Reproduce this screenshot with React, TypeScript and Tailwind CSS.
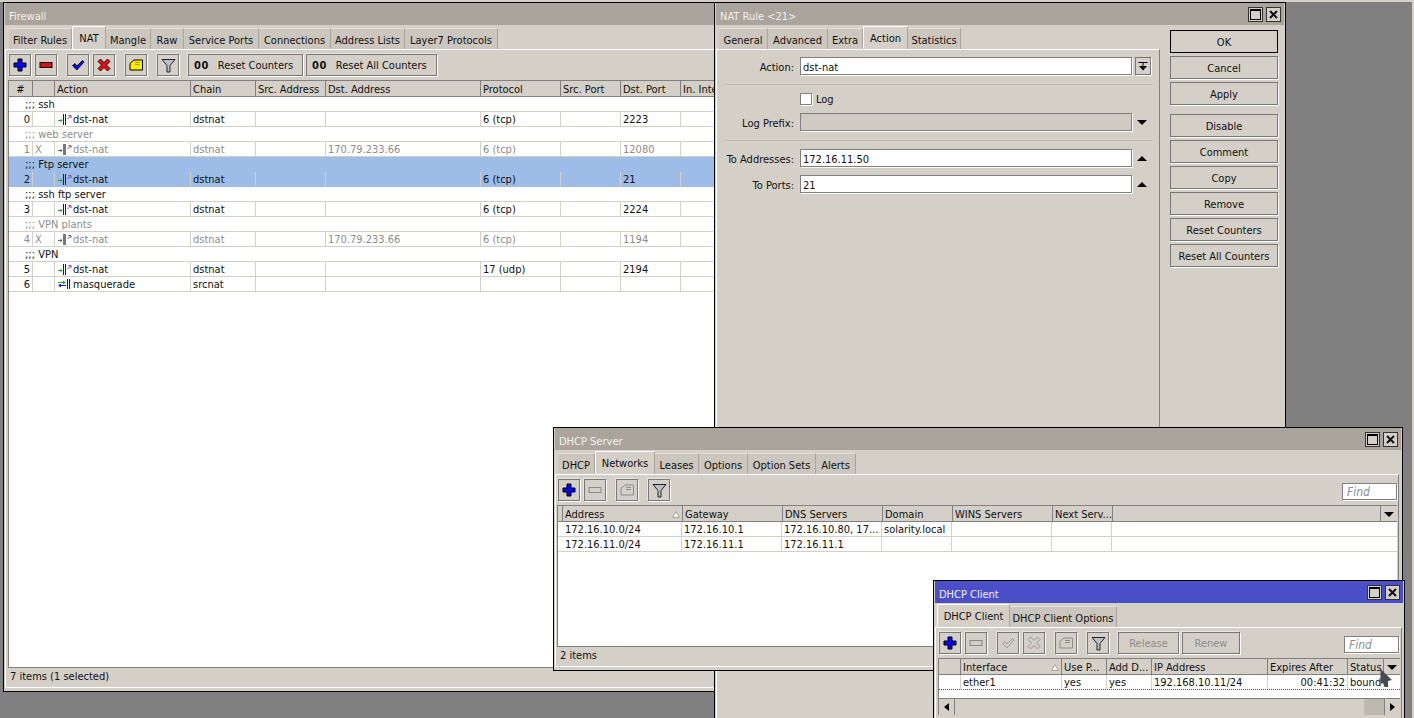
import React from 'react';

const bevel = 'border border-[#777] shadow-[1px_1px_0_#fff,-1px_-1px_0_#e8e6e0]';

const Tab = ({ label, w, active }: { label: string; w: string; active?: boolean }) => (
  <div
    className={`${w} flex items-center justify-center shrink-0 whitespace-nowrap border-r border-[#a9a59d] ${
      active
        ? 'h-[23px] bg-[#d4d0c8] border-t border-l border-t-white border-l-white pt-[1px]'
        : 'h-[21px] bg-[#cbc7bf] border-t border-t-[#e4e1db] pt-[2px]'
    }`}
  >
    {label}
  </div>
);

const TitleBar = ({ title, buttons, blue }: { title: string; buttons?: boolean; blue?: boolean }) => (
  <div
    className={`h-[22px] shrink-0 flex items-center justify-between pl-[4px] pr-[3px] text-[#f2f0ec] ${
      blue ? 'bg-[#4a4fc8]' : 'bg-[#a9a59d]'
    }`}
  >
    <span className="pt-[4px]">{title}</span>
    {buttons && (
      <div className="flex gap-[3px]">
        <div className="w-[15px] h-[15px] bg-[#d4d0c8] border border-[#333] flex items-center justify-center">
          <div className="w-[11px] h-[11px] border border-black border-t-2" />
        </div>
        <div className="w-[15px] h-[15px] bg-[#d4d0c8] border border-[#333] flex items-center justify-center">
          <svg width="9" height="9" viewBox="0 0 9 9">
            <path d="M1 1 L8 8 M8 1 L1 8" stroke="#111" strokeWidth="2" />
          </svg>
        </div>
      </div>
    )}
  </div>
);

const Plus = () => (
  <svg width="14" height="14" viewBox="0 0 14 14">
    <path d="M5 1h4v4h4v4H9v4H5V9H1V5h4z" fill="#0a0ae6" stroke="#000" strokeWidth="1" />
  </svg>
);

const Minus = ({ off }: { off?: boolean }) => (
  <svg width="14" height="8" viewBox="0 0 14 8">
    <rect x="1" y="1.5" width="12" height="5" fill={off ? '#d4d0c8' : '#e01010'} stroke={off ? '#8a8a8a' : '#000'} />
  </svg>
);

const Check = ({ off }: { off?: boolean }) => (
  <svg width="14" height="14" viewBox="0 0 14 14">
    <path
      d="M1.5 7.5 L4 5.5 L5.8 8 L11.5 2.5 L13 4 L5.8 12 Z"
      fill={off ? '#d4d0c8' : '#0a0ae6'}
      stroke={off ? '#8a8a8a' : '#000'}
      strokeWidth="0.8"
    />
  </svg>
);

const Cross = ({ off }: { off?: boolean }) => (
  <svg width="14" height="14" viewBox="0 0 14 14">
    <path
      d="M3.5 1 L7 4.5 L10.5 1 L13 3.5 L9.5 7 L13 10.5 L10.5 13 L7 9.5 L3.5 13 L1 10.5 L4.5 7 L1 3.5 Z"
      fill={off ? '#d4d0c8' : '#e01010'}
      stroke={off ? '#8a8a8a' : '#000'}
      strokeWidth="0.8"
    />
  </svg>
);

const Note = ({ off }: { off?: boolean }) => (
  <svg width="15" height="12" viewBox="0 0 15 12">
    <path
      d="M1 4.5 L5 1 H13.5 V11 H1 Z"
      fill={off ? '#d4d0c8' : '#ffee00'}
      stroke={off ? '#8a8a8a' : '#000'}
    />
    <path d="M6 3.5H11M6 5.5H11" stroke={off ? '#8a8a8a' : '#b09a00'} />
  </svg>
);

const Funnel = () => (
  <svg width="15" height="15" viewBox="0 0 15 15">
    <path d="M1 1.5 H14 L9 7.5 V14 H6 V7.5 Z" fill="#b9c0c8" stroke="#222" />
  </svg>
);

const ToolBtn = ({ children, cls }: { children: React.ReactNode; cls?: string }) => (
  <div className={`w-[22px] h-[22px] mt-[1px] shrink-0 flex items-center justify-center ${bevel} ${cls ?? ''}`}>{children}</div>
);

const TextBtn = ({ w, label, zeros, off }: { w: string; label: string; zeros?: boolean; off?: boolean }) => (
  <div
    className={`${w} h-[22px] mt-[1px] shrink-0 flex items-center gap-[9px] ${bevel} ${
      off ? 'text-[#8c8a85] justify-center' : ''
    } ${zeros ? 'pl-[5px]' : ''}`}
  >
    {zeros && <span className="font-bold tracking-[0.5px]">00</span>}
    {label}
  </div>
);

const DstNatIcon = ({ off }: { off?: boolean }) => (
  <svg width="14" height="11" viewBox="0 0 14 11" className="shrink-0">
    <path d="M0 6.5H3" stroke={off ? '#666' : '#2f9f4f'} />
    <path d="M2.5 4.5 L4.5 6.5 L2.5 8.5Z" fill={off ? '#666' : '#2f9f4f'} />
    {off ? (
      <rect x="5" y="0" width="3" height="11" fill="#777" />
    ) : (
      <path d="M5.5 0V11M7.5 0V11" stroke="#222" />
    )}
    <path d="M9.5 5 L12.5 2 M10.5 1.5H13V4" stroke={off ? '#666' : '#8a3fa8'} fill="none" />
  </svg>
);

const MasqIcon = () => (
  <svg width="14" height="11" viewBox="0 0 14 11" className="shrink-0">
    <path d="M0 3.5H6" stroke="#2f9f4f" />
    <path d="M5 1.5 L8 3.5 L5 5.5Z" fill="#2f9f4f" />
    <path d="M2 6.5H8" stroke="#1a1ad0" />
    <path d="M3 4.5 L0 6.5 L3 8.5Z" fill="#1a1ad0" />
    <path d="M9.5 0V10M11.5 0V10" stroke="#222" />
  </svg>
);

const HeadCell = ({ w, label, sort, cls }: { w: string; label?: string; sort?: boolean; cls?: string }) => (
  <div className={`${w} shrink-0 h-full flex items-center justify-between pl-[2px] pr-[2px] pt-[2px] border-r border-[#808080] overflow-hidden whitespace-nowrap ${cls ?? ''}`}>
    <span>{label}</span>
    {sort && (
      <svg width="8" height="7" viewBox="0 0 8 7" className="shrink-0">
        <path d="M4 0.5 L7.5 6.5 H0.5 Z" fill="#f2f0ec" stroke="#a9a59d" />
      </svg>
    )}
  </div>
);

const Cell = ({ w, children, right, cls }: { w: string; children?: React.ReactNode; right?: boolean; cls?: string }) => (
  <div
    className={`${w} shrink-0 h-full flex items-center gap-[1px] pl-[2px] pr-[2px] border-r border-[#d4d0c8] overflow-hidden whitespace-nowrap ${
      right ? 'justify-end' : ''
    } ${cls ?? ''}`}
  >
    {children}
  </div>
);

const Comment = ({ text, off, sel }: { text: string; off?: boolean; sel?: boolean }) => (
  <div
    className={`h-[15px] flex items-center pl-[16px] border-b border-[#d4d0c8] whitespace-nowrap ${
      off ? 'text-[#8c8c8c]' : ''
    } ${sel ? 'bg-[#9dbde8] border-b-[#9dbde8]' : ''}`}
  >
    ;;; {text}
  </div>
);

type NatRow = {
  n: string;
  x?: string;
  masq?: boolean;
  chain: string;
  dst?: string;
  proto?: string;
  port?: string;
  off?: boolean;
  sel?: boolean;
};

const NatLine = ({ r }: { r: NatRow }) => (
  <div
    className={`h-[15px] flex border-b ${r.sel ? 'bg-[#9dbde8] border-[#9dbde8]' : 'border-[#d4d0c8]'} ${
      r.off ? 'text-[#8c8c8c]' : ''
    }`}
  >
    <Cell w="w-[24px]" right>{r.n}</Cell>
    <Cell w="w-[22px]">{r.x}</Cell>
    <Cell w="w-[136px]" cls="pl-[3px]">
      {r.masq ? <MasqIcon /> : <DstNatIcon off={r.off} />}
      <span>{r.masq ? 'masquerade' : 'dst-nat'}</span>
    </Cell>
    <Cell w="w-[65px]">{r.chain}</Cell>
    <Cell w="w-[70px]" />
    <Cell w="w-[155px]">{r.dst}</Cell>
    <Cell w="w-[80px]">{r.proto}</Cell>
    <Cell w="w-[60px]" />
    <Cell w="w-[60px]">{r.port}</Cell>
    <Cell w="w-[60px]" />
  </div>
);

const FormRow = ({ label, value, tail, disabled, cls }: { label: string; value?: string; tail: React.ReactNode; disabled?: boolean; cls?: string }) => (
  <div className={`flex items-center h-[18px] ${cls ?? ''}`}>
    <div className="w-[76px] pt-[2px] text-right shrink-0 whitespace-nowrap">{label}</div>
    <div className={`ml-[6px] w-[332px] h-[18px] flex items-center pl-[2px] pt-[2px] border border-[#808080] shadow-[1px_1px_0_#fff] ${disabled ? 'bg-[#cfcbc3]' : 'bg-white'}`}>
      {value}
    </div>
    {tail}
  </div>
);

const ArrowUp = () => <div className="ml-[5px] w-0 h-0 border-x-[5px] border-x-transparent border-b-[5px] border-b-black" />;
const ArrowDown = () => <div className="ml-[5px] w-0 h-0 border-x-[5px] border-x-transparent border-t-[5px] border-t-black" />;

const SideBtn = ({ label, main, cls }: { label: string; main?: boolean; cls?: string }) => (
  <div className={`w-[108px] h-[23px] shrink-0 flex items-center justify-center pt-[1px] ${main ? 'border border-black' : 'border border-[#777] shadow-[1px_1px_0_#fff]'} ${cls ?? ''}`}>
    {label}
  </div>
);

const Find = ({ w }: { w: string }) => (
  <div className={`${w} h-[17px] bg-white border border-[#808080] shadow-[1px_1px_0_#fff] flex items-center pl-[4px] italic text-[12px] text-[#8a8f96]`}>
    Find
  </div>
);

const natRows: { comment: string; row: NatRow }[] = [
  { comment: 'ssh', row: { n: '0', chain: 'dstnat', proto: '6 (tcp)', port: '2223' } },
  { comment: 'web server', row: { n: '1', x: 'X', chain: 'dstnat', dst: '170.79.233.66', proto: '6 (tcp)', port: '12080', off: true } },
  { comment: 'Ftp server', row: { n: '2', chain: 'dstnat', proto: '6 (tcp)', port: '21', sel: true } },
  { comment: 'ssh ftp server', row: { n: '3', chain: 'dstnat', proto: '6 (tcp)', port: '2224' } },
  { comment: 'VPN plants', row: { n: '4', x: 'X', chain: 'dstnat', dst: '170.79.233.66', proto: '6 (tcp)', port: '1194', off: true } },
  { comment: 'VPN', row: { n: '5', chain: 'dstnat', proto: '17 (udp)', port: '2194' } },
];

const App: React.FC = () => {
  return (
    <div className="relative w-[1414px] h-[718px] overflow-hidden bg-[#808080] border-t-2 border-r-2 border-[#d4d0c8] text-[11px] leading-none text-[#111] font-['DejaVu_Sans_Condensed','DejaVu_Sans',sans-serif]">
      {/* Firewall */}
      <div className="absolute left-[3px] top-0 w-[720px] h-[690px] z-[1] flex flex-col bg-[#d4d0c8] border border-black p-[1px] pt-0">
        <TitleBar title="Firewall" />
        <div className="h-[24px] shrink-0 flex items-end pl-[4px]">
          <Tab label="Filter Rules" w="w-[63px]" />
          <Tab label="NAT" w="w-[34px]" active />
          <Tab label="Mangle" w="w-[45px]" />
          <Tab label="Raw" w="w-[33px]" />
          <Tab label="Service Ports" w="w-[75px]" />
          <Tab label="Connections" w="w-[72px]" />
          <Tab label="Address Lists" w="w-[74px]" />
          <Tab label="Layer7 Protocols" w="w-[93px]" />
        </div>
        <div className="flex-1 min-h-0 flex flex-col border-t border-l border-b border-white pl-[2px] mb-[2px]">
          <div className="h-[24px] mt-[3px] shrink-0 flex pl-[1px]">
            <ToolBtn><Plus /></ToolBtn>
            <ToolBtn cls="ml-[4px]"><Minus /></ToolBtn>
            <ToolBtn cls="ml-[10px]"><Check /></ToolBtn>
            <ToolBtn cls="ml-[4px]"><Cross /></ToolBtn>
            <ToolBtn cls="ml-[10px]"><Note /></ToolBtn>
            <ToolBtn cls="ml-[10px]"><Funnel /></ToolBtn>
            <TextBtn w="w-[115px] ml-[9px]" label="Reset Counters" zeros />
            <TextBtn w="w-[131px] ml-[3px]" label="Reset All Counters" zeros />
          </div>
          <div className="mt-[3px] flex-1 min-h-0 flex flex-col bg-white border-t border-l border-[#808080]">
            <div className="h-[16px] shrink-0 flex bg-[#d4d0c8] border-b border-[#808080]">
              <HeadCell w="w-[24px]" label="#" cls="justify-center" />
              <HeadCell w="w-[22px]" />
              <HeadCell w="w-[136px]" label="Action" />
              <HeadCell w="w-[65px]" label="Chain" />
              <HeadCell w="w-[70px]" label="Src. Address" />
              <HeadCell w="w-[155px]" label="Dst. Address" />
              <HeadCell w="w-[80px]" label="Protocol" />
              <HeadCell w="w-[60px]" label="Src. Port" />
              <HeadCell w="w-[60px]" label="Dst. Port" />
              <HeadCell w="w-[60px]" label="In. Inter" />
            </div>
            {natRows.map(({ comment, row }) => (
              <React.Fragment key={row.n}>
                <Comment text={comment} off={row.off} sel={row.sel} />
                <NatLine r={row} />
              </React.Fragment>
            ))}
            <NatLine r={{ n: '6', masq: true, chain: 'srcnat' }} />
          </div>
          <div className="h-[20px] shrink-0 flex items-center pl-[2px] pb-[2px] border-t border-[#808080]">7 items (1 selected)</div>
        </div>
      </div>

      {/* NAT Rule */}
      <div className="absolute left-[714px] top-0 w-[572px] h-[730px] z-[2] flex flex-col bg-[#d4d0c8] border border-black p-[1px] pt-0">
        <TitleBar title="NAT Rule <21>" buttons />
        <div className="flex flex-1 min-h-0">
          <div className="w-[444px] shrink-0 flex flex-col">
            <div className="h-[24px] shrink-0 flex items-end pl-[3px]">
              <Tab label="General" w="w-[49px]" />
              <Tab label="Advanced" w="w-[60px]" />
              <Tab label="Extra" w="w-[35px]" />
              <Tab label="Action" w="w-[45px]" active />
              <Tab label="Statistics" w="w-[53px]" />
            </div>
            <div className="flex-1 border-t border-l border-r border-t-white border-l-white border-r-[#808080] pt-[7px] pl-[1px]">
              <FormRow
                label="Action:"
                value="dst-nat"
                tail={
                  <div className="ml-[3px] w-[16px] h-[18px] flex items-center justify-center border border-[#777] shadow-[1px_1px_0_#fff]">
                    <svg width="10" height="9" viewBox="0 0 10 9">
                      <path d="M0.5 0.5H9.5M5 1V4" stroke="#000" />
                      <path d="M1 4H9L5 8.5Z" fill="#000" />
                    </svg>
                  </div>
                }
              />
              <div className="mt-[9px] mx-[8px] w-[427px] h-[1px] bg-[#c2beb6]" />
              <div className="mt-[7px] ml-[82px] flex items-center h-[13px] gap-[4px]">
                <div className="w-[12px] h-[12px] bg-white border border-[#808080] shadow-[1px_1px_0_#fff]" />
                <span className="pt-[2px]">Log</span>
              </div>
              <FormRow cls="mt-[8px]" label="Log Prefix:" disabled tail={<ArrowDown />} />
              <div className="mt-[9px] mx-[8px] w-[427px] h-[1px] bg-[#c2beb6]" />
              <FormRow cls="mt-[8px]" label="To Addresses:" value="172.16.11.50" tail={<ArrowUp />} />
              <FormRow cls="mt-[8px]" label="To Ports:" value="21" tail={<ArrowUp />} />
            </div>
          </div>
          <div className="flex-1 flex flex-col gap-[3px] pt-[5px] pl-[10px]">
            <SideBtn label="OK" main />
            <SideBtn label="Cancel" />
            <SideBtn label="Apply" />
            <SideBtn label="Disable" cls="mt-[6px]" />
            <SideBtn label="Comment" />
            <SideBtn label="Copy" />
            <SideBtn label="Remove" />
            <SideBtn label="Reset Counters" />
            <SideBtn label="Reset All Counters" />
          </div>
        </div>
      </div>

      {/* DHCP Server */}
      <div className="absolute left-[553px] top-[425px] w-[850px] h-[244px] z-[3] flex flex-col bg-[#d4d0c8] border border-black p-[1px] pt-0">
        <TitleBar title="DHCP Server" buttons />
        <div className="h-[24px] shrink-0 flex items-end pl-[3px]">
          <Tab label="DHCP" w="w-[37px]" />
          <Tab label="Networks" w="w-[60px]" active />
          <Tab label="Leases" w="w-[44px]" />
          <Tab label="Options" w="w-[49px]" />
          <Tab label="Option Sets" w="w-[68px]" />
          <Tab label="Alerts" w="w-[40px]" />
        </div>
        <div className="flex-1 min-h-0 flex flex-col border-t border-l border-r border-b border-t-white border-l-white border-b-white border-r-[#808080] pl-[1px] mb-[2px] mr-[2px]">
          <div className="h-[24px] mt-[3px] shrink-0 flex pl-[1px] pr-[1px]">
            <ToolBtn><Plus /></ToolBtn>
            <ToolBtn cls="ml-[4px]"><Minus off /></ToolBtn>
            <ToolBtn cls="ml-[10px]"><Note off /></ToolBtn>
            <ToolBtn cls="ml-[10px]"><Funnel /></ToolBtn>
            <div className="flex-1" />
            <div className="pt-[5px]"><Find w="w-[55px]" /></div>
          </div>
          <div className="mt-[3px] mr-[1px] flex-1 min-h-0 flex flex-col bg-white border-t border-l border-[#808080]">
            <div className="h-[16px] shrink-0 flex bg-[#d4d0c8] border-b border-[#808080]">
              <HeadCell w="w-[4px]" />
              <HeadCell w="w-[120px]" label="Address" sort />
              <HeadCell w="w-[100px]" label="Gateway" />
              <HeadCell w="w-[100px]" label="DNS Servers" />
              <HeadCell w="w-[70px]" label="Domain" />
              <HeadCell w="w-[100px]" label="WINS Servers" />
              <HeadCell w="w-[60px]" label="Next Serv..." />
              <HeadCell w="w-[268px]" />
              <div className="flex-1 flex items-center justify-center pt-[1px]">
                <div className="w-0 h-0 border-x-[5px] border-x-transparent border-t-[5px] border-t-black" />
              </div>
            </div>
            {[
              ['172.16.10.0/24', '172.16.10.1', '172.16.10.80, 17...', 'solarity.local'],
              ['172.16.11.0/24', '172.16.11.1', '172.16.11.1', ''],
            ].map((r) => (
              <div key={r[0]} className="h-[15px] flex border-b border-[#d4d0c8]">
                <Cell w="w-[5px]" cls="border-r-0" />
                <Cell w="w-[119px]">{r[0]}</Cell>
                <Cell w="w-[100px]">{r[1]}</Cell>
                <Cell w="w-[100px]">{r[2]}</Cell>
                <Cell w="w-[70px]">{r[3]}</Cell>
                <Cell w="w-[100px]" />
                <Cell w="w-[60px]" />
              </div>
            ))}
          </div>
          <div className="h-[20px] shrink-0 flex items-center pl-[3px] pb-[2px] border-t border-[#808080]">2 items</div>
        </div>
      </div>

      {/* DHCP Client */}
      <div className="absolute left-[933px] top-[578px] w-[472px] h-[160px] z-[4] flex flex-col bg-[#d4d0c8] border border-black p-[1px] pt-0">
        <TitleBar title="DHCP Client" buttons blue />
        <div className="h-[24px] shrink-0 flex items-end pl-[2px]">
          <Tab label="DHCP Client" w="w-[73px]" active />
          <Tab label="DHCP Client Options" w="w-[107px]" />
        </div>
        <div className="flex-1 min-h-0 flex flex-col border-t border-l border-r border-t-white border-l-white border-r-[#808080] pl-[1px] mr-[1px]">
          <div className="h-[24px] mt-[3px] shrink-0 flex pl-[2px] pr-[2px]">
            <ToolBtn><Plus /></ToolBtn>
            <ToolBtn cls="ml-[4px]"><Minus off /></ToolBtn>
            <ToolBtn cls="ml-[10px]"><Check off /></ToolBtn>
            <ToolBtn cls="ml-[4px]"><Cross off /></ToolBtn>
            <ToolBtn cls="ml-[10px]"><Note off /></ToolBtn>
            <ToolBtn cls="ml-[10px]"><Funnel /></ToolBtn>
            <TextBtn w="w-[61px] ml-[9px]" label="Release" off />
            <TextBtn w="w-[58px] ml-[3px]" label="Renew" off />
            <div className="flex-1" />
            <div className="pt-[5px]"><Find w="w-[55px]" /></div>
          </div>
          <div className="mt-[3px] ml-[1px] mr-[1px] flex flex-col bg-white border-t border-l border-[#808080]">
            <div className="h-[16px] shrink-0 flex bg-[#d4d0c8] border-b border-[#808080]">
              <HeadCell w="w-[22px]" />
              <HeadCell w="w-[101px]" label="Interface" sort />
              <HeadCell w="w-[45px]" label="Use P..." />
              <HeadCell w="w-[45px]" label="Add D..." />
              <HeadCell w="w-[116px]" label="IP Address" />
              <HeadCell w="w-[80px]" label="Expires After" />
              <HeadCell w="w-[36px]" label="Status" />
              <div className="flex-1 flex items-center justify-center pt-[1px]">
                <div className="w-0 h-0 border-x-[5px] border-x-transparent border-t-[5px] border-t-black" />
              </div>
            </div>
            <div className="h-[15px] flex border-b border-dotted border-[#555]">
              <Cell w="w-[22px]" />
              <Cell w="w-[101px]">ether1</Cell>
              <Cell w="w-[45px]">yes</Cell>
              <Cell w="w-[45px]">yes</Cell>
              <Cell w="w-[116px]">192.168.10.11/24</Cell>
              <Cell w="w-[80px]" right>00:41:32</Cell>
              <Cell w="w-[50px]" cls="border-r-0">bound</Cell>
            </div>
            <div className="h-[8px]" />
            <div className="h-[17px] flex items-center bg-[#d4d0c8] border-t border-[#808080]">
              <div className="w-[16px] h-full flex items-center justify-center border-r border-[#808080]">
                <div className="w-0 h-0 border-y-[4px] border-y-transparent border-r-[5px] border-r-black" />
              </div>
              <div className="flex-1" />
              <div className="w-[20px] h-full bg-[#bdb9b1]" />
              <div className="w-[16px] h-full flex items-center justify-center border-l border-[#808080]">
                <div className="w-0 h-0 border-y-[4px] border-y-transparent border-l-[5px] border-l-black" />
              </div>
            </div>
          </div>
        </div>
      </div>

      {/* mouse cursor */}
      <svg width="14" height="20" viewBox="0 0 14 20" className="absolute left-[1380px] top-[666px] z-[5]">
        <path d="M0.5 1 L12 12 L8 13 L8 19 L4.5 19 L3 15 L0.5 16 Z" fill="#4a4a4a" />
      </svg>
    </div>
  );
};

export default App;
